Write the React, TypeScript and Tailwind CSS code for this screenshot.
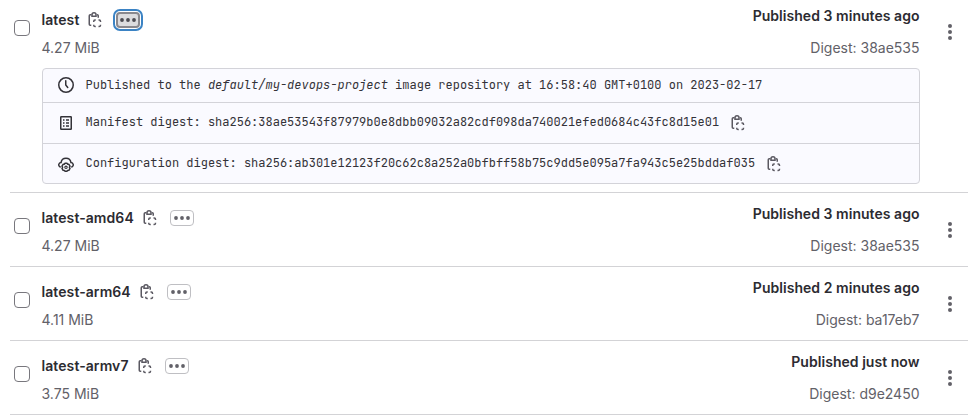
import type { ReactNode } from "react";

function CopyIcon() {
  return (
    <svg width="16" height="16" viewBox="0 0 16 16" fill="none" stroke="#5a5861" strokeWidth="1.5" className="block shrink-0">
      <path d="M4.5 2.75H3.25q-1 0-1 1v8.5q0 1 1 1h1M9.75 2.75h.5q1 0 1 1V5.75" />
      <path d="M5 4.25V2.75a2 2 0 0 1 4 0v1.5z" />
      <path d="M6.75 10V9.25q0-1.25 1.25-1.25h.75M11.5 8h.75q1.25 0 1.25 1.25V10M13.5 12.75v.5q0 1.25-1.25 1.25h-.75M8.75 14.5H8q-1.25 0-1.25-1.25v-.5" />
    </svg>
  );
}

function MoreButton({ active }: { active?: boolean }) {
  const look = active
    ? "bg-[#dcdcde] border-2 border-[#89888d] outline-2 outline-offset-1 outline-[#3b83c4]"
    : "bg-white border border-[#bfbfc3]";
  return (
    <button className={"flex h-4 w-6 items-center justify-center rounded-[4px] " + look}>
      <svg width="16" height="6" viewBox="0 0 16 6" fill={active ? "#4c4b51" : "#626168"} className="shrink-0">
        <circle cx="2" cy="3" r="1.9" />
        <circle cx="8" cy="3" r="1.9" />
        <circle cx="14" cy="3" r="1.9" />
      </svg>
    </button>
  );
}

function ClockIcon() {
  return (
    <svg width="16" height="16" viewBox="0 0 16 16" fill="none" stroke="#333238" strokeWidth="1.5" className="-mt-px shrink-0">
      <circle cx="8" cy="8" r="7.25" />
      <path d="M7.75 3.75V8l2 2.5" strokeLinecap="round" />
    </svg>
  );
}

function ManifestIcon() {
  return (
    <svg width="16" height="16" viewBox="0 0 16 16" fill="none" stroke="#333238" strokeWidth="1.5" className="shrink-0">
      <rect x="2.75" y="1.75" width="10.5" height="12.5" rx=".5" />
      <path d="M5 5h1.5M8 5h3M5 8h1.5M8 8h3M5 11h1.5M8 11h3" />
    </svg>
  );
}

function CloudGearIcon() {
  return (
    <svg width="16" height="16" viewBox="0 0 16 16" fill="none" stroke="#333238" strokeWidth="1.5" className="shrink-0">
      <path d="M2.2 11A2.4 2.4 0 0 1 3.1 6.4A4.95 4.7 0 0 1 12.9 6.4A2.4 2.4 0 0 1 13.8 11" strokeLinecap="round" />
      <path d="M6.9 7.3h2.2l.5.9 1.3.1 1.1 1.9-.6 1.1.6 1.1-1.1 1.9-1.3.1-.5.8H6.900l-.5-.8-1.300-.1L4 12.400l.6-1.100L4 10.200l1.100-1.900 1.300-.1z" strokeLinejoin="round" />
      <circle cx="8" cy="11.3" r="1.2" strokeWidth="1.1" />
    </svg>
  );
}

function DetailRow({ icon, children, copy, className }: { icon: ReactNode; children: ReactNode; copy?: boolean; className: string }) {
  return (
    <div className={"flex items-center pl-[15px] " + className}>
      {icon}
      <span className="ml-[11.5px] whitespace-pre pb-0.5 font-['JetBrains_Mono','DejaVu_Sans_Mono',monospace] text-[12px] leading-4 text-[#333238]">
        {children}
      </span>
      {copy && <span className="ml-[11px]"><CopyIcon /></span>}
    </div>
  );
}

type Tag = { name: string; size: string; published: string; digest: string };

function TagRow({ tag, active, className, children }: { tag: Tag; active?: boolean; className: string; children?: ReactNode }) {
  return (
    <div className={"border-b border-[#d3d3d6] " + className}>
      <div className="flex h-[60px]">
        <div className="w-[31.5px] shrink-0 pt-5 pl-1">
          <div className="size-4 rounded-[4px] border border-[#78777d] bg-white" />
        </div>
        <div className="grow pt-2">
          <div className="flex h-6 items-center">
            <span className="text-[14px] font-semibold leading-6 tracking-[0.08px] text-[#2c2b31]">{tag.name}</span>
            <span className="ml-2 mr-[12.5px]"><CopyIcon /></span>
            <MoreButton active={active} />
          </div>
          <div className="mt-1 text-[14px] leading-6 text-[#626168]">{tag.size}</div>
        </div>
        <div className="pt-1 text-right text-[14px] leading-6">
          <div className="font-semibold tracking-[0.04px] text-[#2c2b31]">{tag.published}</div>
          <div className="mt-2 text-[#626168]">Digest: {tag.digest}</div>
        </div>
        <div className="flex w-[48.5px] shrink-0 justify-center pl-[13px] pt-6">
          <svg width="16" height="16" viewBox="0 0 16 16" fill="#626168">
            <circle cx="8" cy="2" r="2" />
            <circle cx="8" cy="8" r="2" />
            <circle cx="8" cy="14" r="2" />
          </svg>
        </div>
      </div>
      {children}
    </div>
  );
}

const tags: Tag[] = [
  { name: "latest-amd64", size: "4.27 MiB", published: "Published 3 minutes ago", digest: "38ae535" },
  { name: "latest-arm64", size: "4.11 MiB", published: "Published 2 minutes ago", digest: "ba17eb7" },
  { name: "latest-armv7", size: "3.75 MiB", published: "Published just now", digest: "d9e2450" },
];

export default function App() {
  return (
    <div className="h-[415px] overflow-hidden bg-white pl-2.5 pr-[5px] font-['Inter','Liberation_Sans',sans-serif]">
      <TagRow
        active
        className="h-[193px]"
        tag={{ name: "latest", size: "4.27 MiB", published: "Published 3 minutes ago", digest: "38ae535" }}
      >
        <div className="ml-8 mr-12 mt-2 h-[116px] rounded-[4px] border border-[#d3d3d9] bg-[#fafaff]">
          <DetailRow icon={<ClockIcon />} className="h-[34px] border-b border-[#d3d3d9]">
            Published to the <i>default/my-devops-project</i> image repository at 16:58:40 GMT+0100 on 2023-02-17
          </DetailRow>
          <DetailRow icon={<ManifestIcon />} copy className="h-[41px] border-b border-[#d3d3d9]">
            Manifest digest: sha256:38ae53543f87979b0e8dbb09032a82cdf098da740021efed0684c43fc8d15e01
          </DetailRow>
          <DetailRow icon={<CloudGearIcon />} copy className="h-[39px]">
            Configuration digest: sha256:ab301e12123f20c62c8a252a0bfbff58b75c9dd5e095a7fa943c5e25bddaf035
          </DetailRow>
        </div>
      </TagRow>
      {tags.map((tag) => (
        <TagRow key={tag.name} tag={tag} className="h-[74px] pt-[5px]" />
      ))}
    </div>
  );
}
